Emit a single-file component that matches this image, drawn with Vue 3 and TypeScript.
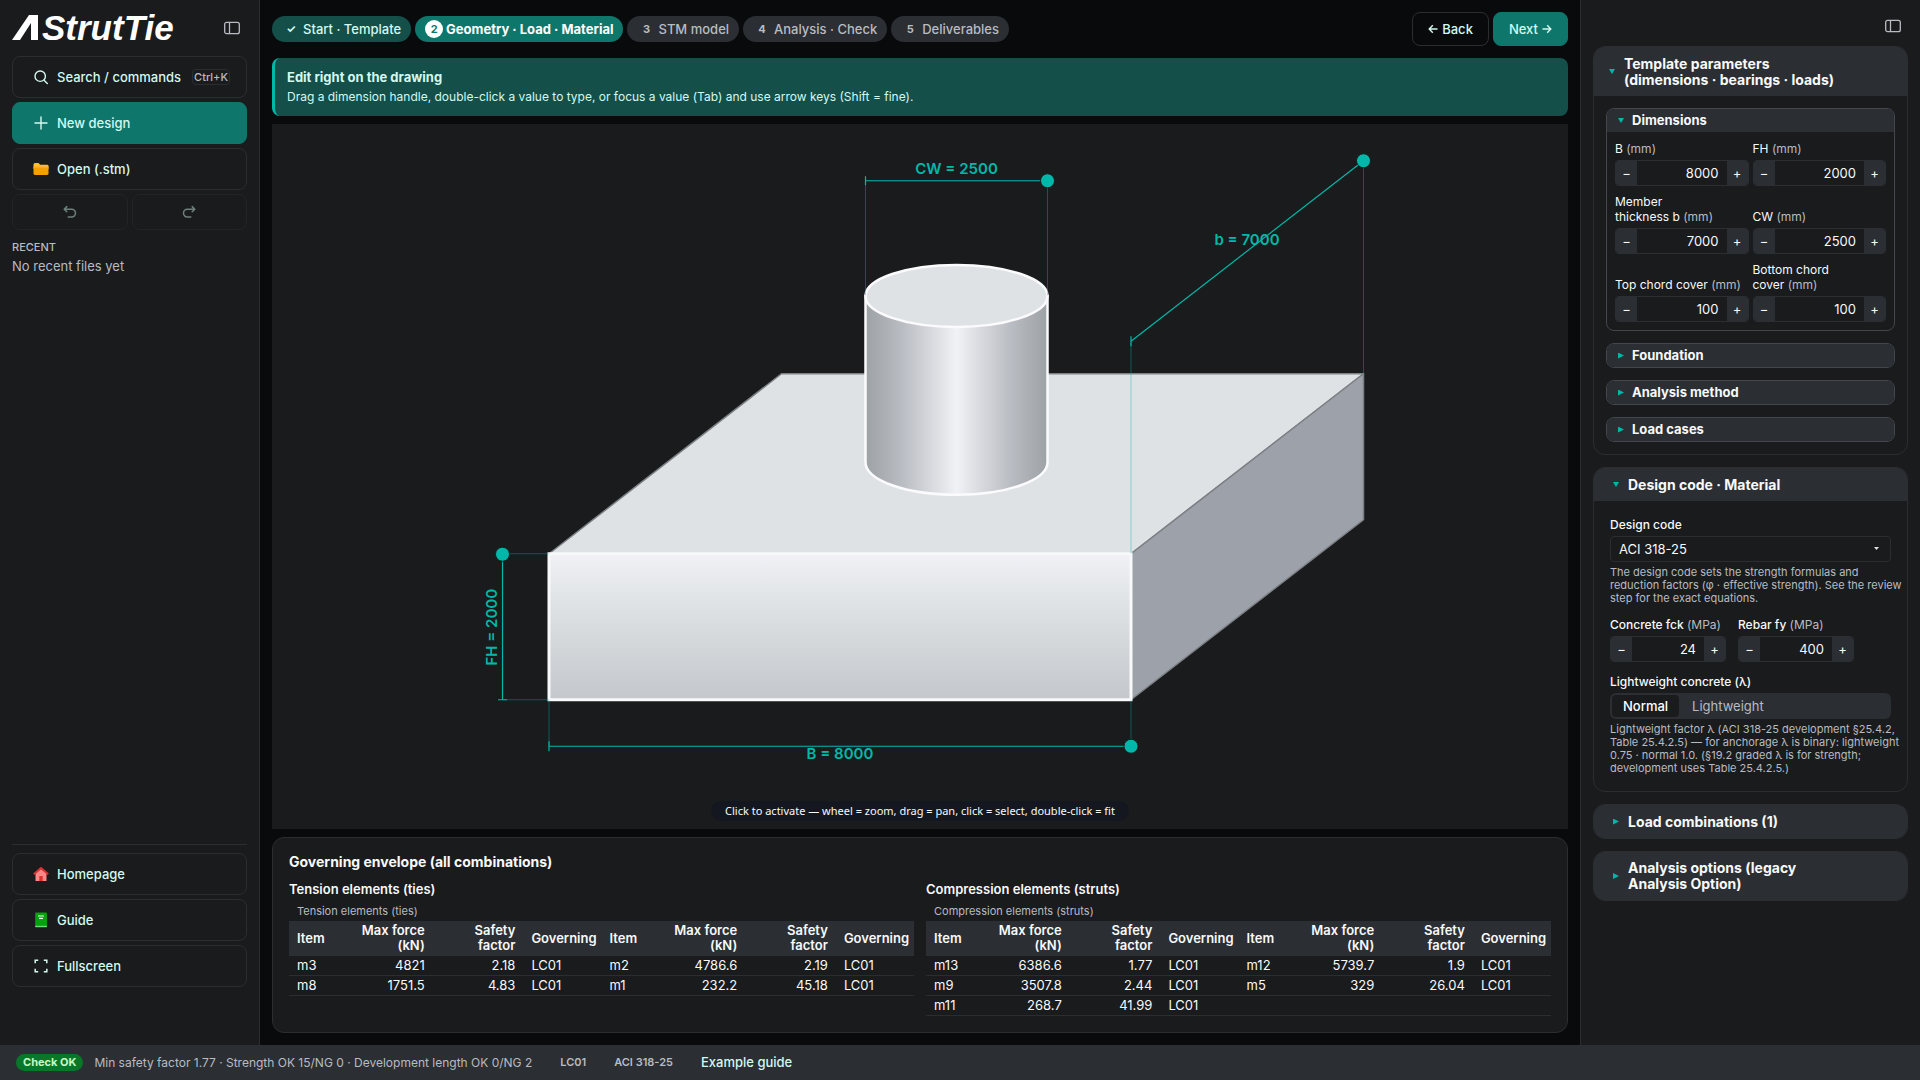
<script setup lang="ts">
import { reactive, ref } from 'vue'

interface Step {
  mark: string
  label: string
  state: 'done' | 'current' | 'todo'
}

interface Field {
  id: string
  label: string
  unit: string
  value: number
  step: number
}

type Cell = [item: string, force: string, safety: string, governing: string]

interface ResultTable {
  title: string
  rows: [Cell, Cell?][]
}

const steps: Step[] = [
  { mark: '✓', label: 'Start · Template', state: 'done' },
  { mark: '2', label: 'Geometry · Load · Material', state: 'current' },
  { mark: '3', label: 'STM model', state: 'todo' },
  { mark: '4', label: 'Analysis · Check', state: 'todo' },
  { mark: '5', label: 'Deliverables', state: 'todo' },
]

const dimensions = reactive<Field[]>([
  { id: 'dim-b', label: 'B', unit: '(mm)', value: 8000, step: 100 },
  { id: 'dim-fh', label: 'FH', unit: '(mm)', value: 2000, step: 100 },
  { id: 'dim-thk', label: 'Member\nthickness b', unit: '(mm)', value: 7000, step: 100 },
  { id: 'dim-cw', label: 'CW', unit: '(mm)', value: 2500, step: 100 },
  { id: 'dim-top', label: 'Top chord cover', unit: '(mm)', value: 100, step: 10 },
  { id: 'dim-bot', label: 'Bottom chord\ncover', unit: '(mm)', value: 100, step: 10 },
])

const materials = reactive<Field[]>([
  { id: 'mat-fck', label: 'Concrete fck', unit: '(MPa)', value: 24, step: 1 },
  { id: 'mat-fy', label: 'Rebar fy', unit: '(MPa)', value: 400, step: 10 },
])

const closedGroups = ['Foundation', 'Analysis method', 'Load cases']

const tables: ResultTable[] = [
  {
    title: 'Tension elements (ties)',
    rows: [
      [['m3', '4821', '2.18', 'LC01'], ['m2', '4786.6', '2.19', 'LC01']],
      [['m8', '1751.5', '4.83', 'LC01'], ['m1', '232.2', '45.18', 'LC01']],
    ],
  },
  {
    title: 'Compression elements (struts)',
    rows: [
      [['m13', '6386.6', '1.77', 'LC01'], ['m12', '5739.7', '1.9', 'LC01']],
      [['m9', '3507.8', '2.44', 'LC01'], ['m5', '329', '26.04', 'LC01']],
      [['m11', '268.7', '41.99', 'LC01'], undefined],
    ],
  },
]

const designCode = ref('ACI 318-25')
const weight = ref('Normal')

function nudge(field: Field, direction: number) {
  field.value += direction * field.step
}
</script>

<template>
  <div class="app">
    <aside class="sidebar">
      <div class="brand">
        <svg class="logo" viewBox="0 0 164 28" role="img" aria-label="AStrutTie">
          <path d="M0 26 L17 1 H26 V26 H19 V9 L8 26 Z" fill="#fff" />
          <text x="30" y="26" class="logo-text">StrutTie</text>
        </svg>
        <button class="icon-btn" type="button" aria-label="Toggle sidebar">
          <svg width="16" height="16" viewBox="0 0 16 16" fill="none" stroke="currentColor" stroke-width="1.3">
            <rect x="0.7" y="2.3" width="14.6" height="11.4" rx="2" />
            <path d="M5.5 2.3V13.7" />
          </svg>
        </button>
      </div>

      <button class="side-btn" type="button">
        <svg class="ico" viewBox="0 0 16 16" fill="none" stroke="currentColor" stroke-width="1.4" stroke-linecap="round">
          <circle cx="7.2" cy="7.2" r="5.2" />
          <path d="M11 11.2L14.3 14.5" />
        </svg>
        <span>Search / commands</span>
        <kbd>Ctrl+K</kbd>
      </button>
      <button class="side-btn primary" type="button">
        <svg class="ico" viewBox="0 0 16 16" fill="none" stroke="currentColor" stroke-width="1.4" stroke-linecap="round">
          <path d="M8 2V14M2 8H14" />
        </svg>
        <span>New design</span>
      </button>
      <button class="side-btn" type="button">
        <svg class="ico" viewBox="0 0 16 16">
          <path d="M0.5 3.5Q0.5 2 2 2H5.5L7.2 3.7H14Q15.5 3.7 15.5 5V8H0.5Z" fill="#fcc419" />
          <path d="M0.5 6.2H15.5V12.6Q15.5 14 14 14H2Q0.5 14 0.5 12.6Z" fill="#f59f00" />
          <path d="M0.5 5.4H15.5V6.6H0.5Z" fill="#ffa94d" />
        </svg>
        <span>Open (.stm)</span>
      </button>
      <div class="history">
        <button type="button" disabled aria-label="Undo">
          <svg width="16" height="16" viewBox="0 0 16 16" fill="none" stroke="currentColor" stroke-width="1.5" stroke-linecap="round" stroke-linejoin="round">
            <path d="M4.8 2.6L2.2 5.2L4.8 7.8M2.2 5.2H9.6A3.9 3.9 0 0 1 9.6 13H6.2" />
          </svg>
        </button>
        <button type="button" disabled aria-label="Redo">
          <svg width="16" height="16" viewBox="0 0 16 16" fill="none" stroke="currentColor" stroke-width="1.5" stroke-linecap="round" stroke-linejoin="round">
            <path d="M11.2 2.6L13.8 5.2L11.2 7.8M13.8 5.2H6.4A3.9 3.9 0 0 0 6.4 13H9.8" />
          </svg>
        </button>
      </div>
      <h2 class="recent">RECENT</h2>
      <p class="no-recent">No recent files yet</p>

      <nav class="side-links">
        <button class="side-btn" type="button">
          <svg class="ico" viewBox="0 0 16 16">
            <path d="M2.5 7.5L8 3L13.5 7.5V15H2.5Z" fill="#ff8787" />
            <path d="M6.3 10H9.7V15H6.3Z" fill="#e03131" />
            <path d="M0.8 8.2L8 2L15.2 8.2" fill="none" stroke="#e03131" stroke-width="2" stroke-linejoin="round" />
          </svg>
          <span>Homepage</span>
        </button>
        <button class="side-btn" type="button">
          <svg class="ico" viewBox="0 0 16 16">
            <rect x="2.2" y="0.5" width="11.8" height="15" rx="1" fill="#00a30b" />
            <path d="M2.2 13.8H14V15H2.2Z" fill="#69db7c" />
            <path d="M5 4H11M6 6.4H10" stroke="#ebfbee" stroke-width="1.2" />
          </svg>
          <span>Guide</span>
        </button>
        <button class="side-btn" type="button">
          <svg class="ico" viewBox="0 0 16 16" fill="none" stroke="currentColor" stroke-width="1.5">
            <path d="M2.2 5.2V2.2H5.2M10.8 2.2H13.8V5.2M13.8 10.8V13.8H10.8M5.2 13.8H2.2V10.8" />
          </svg>
          <span>Fullscreen</span>
        </button>
      </nav>
    </aside>

    <main class="main">
      <header class="topbar">
        <ol class="steps">
          <li v-for="step in steps" :key="step.label">
            <button class="step" :class="step.state" type="button">
              <span class="mark">{{ step.mark }}</span>
              <span>{{ step.label }}</span>
            </button>
          </li>
        </ol>
        <div class="pager">
          <button class="pager-btn" type="button">
            <svg width="10" height="10" viewBox="0 0 10 10" fill="none" stroke="currentColor" stroke-width="1.4"><path d="M9.5 5H1.2M4.8 1.3L1.2 5L4.8 8.7" /></svg>
            Back
          </button>
          <button class="pager-btn primary" type="button">
            Next
            <svg width="10" height="10" viewBox="0 0 10 10" fill="none" stroke="currentColor" stroke-width="1.4"><path d="M0.5 5H8.8M5.2 1.3L8.8 5L5.2 8.7" /></svg>
          </button>
        </div>
      </header>

      <section class="banner">
        <strong>Edit right on the drawing</strong>
        <p>Drag a dimension handle, double-click a value to type, or focus a value (Tab) and use arrow keys (Shift = fine).</p>
      </section>

      <section class="canvas">
        <svg class="drawing" viewBox="0 0 1296 704">
          <defs>
            <linearGradient id="front" x1="0" y1="0" x2="0" y2="1">
              <stop offset="0" stop-color="#f1f1f6" />
              <stop offset="0.35" stop-color="#dee2e4" />
              <stop offset="0.5" stop-color="#d8dcde" />
              <stop offset="1" stop-color="#c4c7cc" />
            </linearGradient>
            <linearGradient id="barrel" x1="0" y1="0" x2="1" y2="0">
              <stop offset="0" stop-color="#9da2a5" />
              <stop offset="0.2" stop-color="#b9bcc2" />
              <stop offset="0.5" stop-color="#f1f2f5" />
              <stop offset="0.8" stop-color="#b9bcc2" />
              <stop offset="1" stop-color="#9da2a5" />
            </linearGradient>
          </defs>

          <g stroke="#7d8186" stroke-width="1.5" stroke-linejoin="round">
            <path d="M277 429.500L509.500 249.500H1091.500L859 429.500Z" fill="#dee2e5" />
            <path d="M859 429.500L1091.500 249.500V395.500L859 575.500Z" fill="#9da1a9" />
          </g>
          <rect x="277" y="429.500" width="582" height="146" fill="url(#front)" stroke="#f8f9fa" stroke-width="3" />
          <path d="M593.500 171.700V338C593.500 356 634 370.500 684.500 370.500S775.500 356 775.500 338V171.700Z" fill="url(#barrel)" stroke="#fbfbfd" stroke-width="2.500" />
          <ellipse cx="684.500" cy="171.700" rx="91" ry="31" fill="#dee2e5" stroke="#fbfbfd" stroke-width="2.500" />

          <g class="ext">
            <path d="M593.500 56V171M775.500 56V171" />
            <path d="M859 217V429M1091.500 37V249" />
            <path d="M231 429.500H277M231 575.500H277" />
            <path d="M277 576V622M859 576V622" />
          </g>
          <g class="dim">
            <path d="M593.500 56.500H775.500M593.500 52V61" />
            <path d="M859 217L1091.500 36.500M859 212V222" />
            <path d="M230.500 429.500V575.500M226 575.500H235" />
            <path d="M277 622H859M277 617V627" />
          </g>
          <g class="handle">
            <circle cx="775.500" cy="56.500" r="7" />
            <circle cx="1091.500" cy="36.500" r="7" />
            <circle cx="230.500" cy="430" r="7" />
            <circle cx="859" cy="622" r="7" />
          </g>
          <g class="dim-label">
            <text x="684.500" y="50">CW = 2500</text>
            <text x="975" y="121">b = 7000</text>
            <text transform="translate(225 503) rotate(-90)">FH = 2000</text>
            <text x="568" y="635">B = 8000</text>
          </g>
        </svg>
        <p class="hint-pill">Click to activate — wheel = zoom, drag = pan, click = select, double-click = fit</p>
      </section>

      <section class="results">
        <h2>Governing envelope (all combinations)</h2>
        <div class="result-grid">
          <div v-for="table in tables" :key="table.title">
            <h3>{{ table.title }}</h3>
            <table>
              <caption>{{ table.title }}</caption>
              <colgroup>
                <template v-for="n in 2" :key="n">
                  <col class="c-item" /><col class="c-force" /><col class="c-safety" /><col class="c-gov" />
                </template>
              </colgroup>
              <thead>
                <tr>
                  <template v-for="n in 2" :key="n">
                    <th scope="col">Item</th>
                    <th scope="col" class="num">Max force (kN)</th>
                    <th scope="col" class="num">Safety factor</th>
                    <th scope="col" class="gov">Governing</th>
                  </template>
                </tr>
              </thead>
              <tbody>
                <tr v-for="(row, r) in table.rows" :key="r">
                  <template v-for="(cell, c) in row" :key="c">
                    <td>{{ cell?.[0] }}</td>
                    <td class="num">{{ cell?.[1] }}</td>
                    <td class="num">{{ cell?.[2] }}</td>
                    <td>{{ cell?.[3] }}</td>
                  </template>
                </tr>
              </tbody>
            </table>
          </div>
        </div>
      </section>
    </main>

    <aside class="panel">
      <div class="panel-top">
        <button class="icon-btn" type="button" aria-label="Toggle panel">
          <svg width="16" height="16" viewBox="0 0 16 16" fill="none" stroke="currentColor" stroke-width="1.3">
            <rect x="0.7" y="2.3" width="14.6" height="11.4" rx="2" />
            <path d="M5.5 2.3V13.7" />
          </svg>
        </button>
      </div>

      <section class="card">
        <button class="card-head lead" type="button" aria-expanded="true">
          <i class="tri down"></i><span>Template parameters<br />(dimensions · bearings · loads)</span>
        </button>
        <div class="groups">
          <div class="group">
            <button class="group-head" type="button" aria-expanded="true"><i class="tri down"></i>Dimensions</button>
            <div class="dim-grid">
              <div v-for="f in dimensions" :key="f.id" class="field">
                <label :for="f.id">{{ f.label }} <span class="unit">{{ f.unit }}</span></label>
                <div class="stepper">
                  <button type="button" :aria-label="`Decrease ${f.label}`" @click="nudge(f, -1)">−</button>
                  <input :id="f.id" v-model.number="f.value" inputmode="numeric" />
                  <button type="button" :aria-label="`Increase ${f.label}`" @click="nudge(f, 1)">+</button>
                </div>
              </div>
            </div>
          </div>
          <div v-for="g in closedGroups" :key="g" class="group">
            <button class="group-head" type="button" aria-expanded="false"><i class="tri right"></i>{{ g }}</button>
          </div>
        </div>
      </section>

      <section class="card">
        <button class="card-head" type="button" aria-expanded="true"><i class="tri down"></i><span>Design code · Material</span></button>
        <div class="form">
          <div class="field">
            <label for="code">Design code</label>
            <div class="select">
              <select id="code" v-model="designCode"><option>ACI 318-25</option></select>
              <i class="caret"></i>
            </div>
            <p class="note">The design code sets the strength formulas and reduction factors (φ · effective strength). See the review step for the exact equations.</p>
          </div>
          <div class="mat-row">
            <div v-for="f in materials" :key="f.id" class="field">
              <label :for="f.id">{{ f.label }} <span class="unit">{{ f.unit }}</span></label>
              <div class="stepper">
                <button type="button" :aria-label="`Decrease ${f.label}`" @click="nudge(f, -1)">−</button>
                <input :id="f.id" v-model.number="f.value" inputmode="numeric" />
                <button type="button" :aria-label="`Increase ${f.label}`" @click="nudge(f, 1)">+</button>
              </div>
            </div>
          </div>
          <div class="field">
            <span id="lw" class="label">Lightweight concrete (λ)</span>
            <div class="segmented" role="radiogroup" aria-labelledby="lw">
              <label v-for="w in ['Normal', 'Lightweight']" :key="w" :class="{ on: weight === w }">
                <input v-model="weight" type="radio" name="weight" :value="w" />{{ w }}
              </label>
            </div>
            <p class="note">Lightweight factor λ (ACI 318-25 development §25.4.2, Table 25.4.2.5) — for anchorage λ is binary: lightweight 0.75 · normal 1.0. (§19.2 graded λ is for strength; development uses Table 25.4.2.5.)</p>
          </div>
        </div>
      </section>

      <section class="card">
        <button class="card-head" type="button" aria-expanded="false"><i class="tri right"></i><span>Load combinations (1)</span></button>
      </section>
      <section class="card">
        <button class="card-head tall" type="button" aria-expanded="false"><i class="tri right"></i><span>Analysis options (legacy<br />Analysis Option)</span></button>
      </section>
    </aside>

    <footer class="status">
      <span class="badge">Check OK</span>
      <span class="summary">Min safety factor 1.77 · Strength OK 15/NG 0 · Development length OK 0/NG 2</span>
      <span class="tag">LC01</span>
      <span class="tag">ACI 318-25</span>
      <a href="#guide">Example guide</a>
    </footer>
  </div>
</template>

<style>
body {
  margin: 0;
  background: #090a0c;
}
</style>

<style scoped>
.app {
  --surface: #1a1b1d;
  --raised: #2b2e33;
  --line: #2b2d31;
  --teal: #0f766c;
  --accent: #00b8a9;
  --mint: #d3f9f0;
  --dim: #b8bcc2;
  display: grid;
  grid-template: 1fr auto / 260px minmax(0, 1fr) 340px;
  min-height: 100vh;
  font: 13px/15px Inter, 'Noto Sans', sans-serif;
  color: #f8f9fa;
  background: #090a0c;
}
.app *,
.app *::before {
  box-sizing: border-box;
}
button,
input,
select {
  font: inherit;
  color: inherit;
  margin: 0;
}
button {
  cursor: pointer;
}
h2,
h3,
p,
ol {
  margin: 0;
  padding: 0;
}

.sidebar {
  display: flex;
  flex-direction: column;
  gap: 4px;
  padding: 12px 12px 58px;
  background: var(--surface);
  border-right: 1px solid var(--line);
}
.brand {
  display: flex;
  align-items: center;
  justify-content: space-between;
  height: 32px;
  margin-bottom: 8px;
  padding-right: 7px;
}
.logo {
  width: 164px;
  height: 28px;
  overflow: visible;
}
.logo-text {
  font: italic 700 35px 'Liberation Sans', Arial, sans-serif;
  fill: #fff;
}
.icon-btn {
  display: flex;
  padding: 0;
  border: 0;
  background: none;
  color: var(--dim);
}
.side-btn {
  display: flex;
  align-items: center;
  gap: 8px;
  height: 42px;
  padding: 0 16px 0 20px;
  border: 1px solid var(--line);
  border-radius: 8px;
  background: transparent;
  color: var(--mint);
  font-weight: 500;
}
.side-btn.primary {
  background: var(--teal);
  border-color: var(--teal);
}
.ico {
  flex: none;
  width: 16px;
  height: 16px;
}
kbd {
  margin-left: auto;
  padding: 0 1px;
  border: 1px solid var(--line);
  border-radius: 4px;
  font: 500 11px/14px Inter, sans-serif;
  color: var(--dim);
}
.history {
  display: grid;
  grid-template-columns: 1fr 1fr;
  gap: 4px;
}
.history button {
  display: flex;
  align-items: center;
  justify-content: center;
  height: 36px;
  padding: 0;
  border: 1px solid #222427;
  border-radius: 8px;
  background: transparent;
  color: #6f7f7c;
}
.recent {
  margin-top: 6px;
  font: 500 11px/15px Inter, sans-serif;
  color: var(--dim);
}
.no-recent {
  color: var(--dim);
}
.side-links {
  display: flex;
  flex-direction: column;
  gap: 4px;
  margin-top: auto;
  padding-top: 8px;
  border-top: 1px solid var(--line);
}

.main {
  display: flex;
  flex-direction: column;
  gap: 8px;
  padding: 12px;
}
.topbar {
  display: flex;
  align-items: center;
  justify-content: space-between;
  margin-bottom: 4px;
}
.steps {
  display: flex;
  gap: 4px;
  list-style: none;
}
.step {
  display: flex;
  align-items: center;
  gap: 3px;
  height: 26px;
  padding: 0 10px;
  border: 0;
  border-radius: 13px;
  background: var(--raised);
  color: var(--dim);
  font-weight: 500;
  white-space: nowrap;
}
.step.done {
  background: #154f49;
  color: var(--mint);
}
.step.current {
  background: var(--teal);
  color: #fff;
  font-weight: 700;
}
.mark {
  width: 18px;
  border-radius: 9px;
  font: 700 11px/18px Inter, sans-serif;
  text-align: center;
}
.current .mark {
  background: #fff;
  color: var(--teal);
}
.pager {
  display: flex;
  gap: 4px;
}
.pager-btn {
  display: flex;
  align-items: center;
  gap: 4px;
  height: 34px;
  padding: 0 15px;
  border: 1px solid var(--line);
  border-radius: 8px;
  background: transparent;
  color: var(--mint);
  font-weight: 500;
}
.pager-btn.primary {
  background: var(--teal);
  border-color: var(--teal);
}
.banner {
  padding: 10px 12px;
  border-left: 3px solid var(--accent);
  border-radius: 8px;
  background: #154f49;
  color: var(--mint);
  line-height: 19px;
}
.banner strong {
  display: block;
}
.banner p {
  font-size: 12px;
}
.canvas {
  position: relative;
  display: flex;
  flex: 1;
  min-height: 400px;
  background: var(--surface);
}
.drawing {
  width: 100%;
  height: 100%;
}
.ext {
  fill: none;
  stroke: var(--accent);
  stroke-opacity: 0.4;
}
.dim {
  fill: none;
  stroke: var(--accent);
  stroke-width: 1.2;
}
.handle {
  fill: var(--accent);
  stroke: var(--surface);
}
.dim-label {
  font: 600 15px Inter, sans-serif;
  fill: var(--accent);
  text-anchor: middle;
}
.hint-pill {
  position: absolute;
  bottom: 8px;
  left: 50%;
  padding: 0 14px;
  border-radius: 10px;
  background: #14171f;
  font: 11px/20px 'Noto Sans', sans-serif;
  white-space: nowrap;
  transform: translateX(-50%);
}
.results {
  padding: 16px;
  border: 1px solid var(--line);
  border-radius: 12px;
  background: var(--surface);
}
.results h2 {
  margin-bottom: 10px;
  font: 700 14px/16px Inter, sans-serif;
}
.results h3 {
  margin-bottom: 4px;
  font: 600 13px/18px Inter, sans-serif;
}
.result-grid {
  display: grid;
  grid-template-columns: 1fr 1fr;
  gap: 12px;
}
table {
  width: 100%;
  table-layout: fixed;
  border-collapse: collapse;
}
caption {
  padding: 2px 8px;
  font-size: 11px;
  line-height: 15px;
  text-align: left;
  color: var(--dim);
}
.c-item {
  width: 9%;
}
.c-force {
  width: 14%;
}
.c-safety {
  width: 14.5%;
}
.c-gov {
  width: 12.5%;
}
th,
td {
  height: 20px;
  padding: 2px 8px;
  text-align: left;
}
th {
  height: 35px;
  background: var(--raised);
  font-weight: 600;
}
th.gov {
  padding-right: 0;
}
td {
  border-bottom: 1px solid var(--line);
}
th.num,
td.num {
  text-align: right;
}

.panel {
  display: flex;
  flex-direction: column;
  gap: 12px;
  padding: 18px 12px 12px;
  background: var(--surface);
  border-left: 1px solid var(--line);
}
.panel-top {
  display: flex;
  justify-content: flex-end;
  height: 16px;
  padding-right: 7px;
}
.card {
  overflow: hidden;
  border: 1px solid var(--line);
  border-radius: 12px;
}
.card-head {
  display: flex;
  align-items: center;
  gap: 9px;
  width: 100%;
  min-height: 33px;
  padding: 0 19px;
  border: 0;
  background: var(--raised);
  font-weight: 700;
  font-size: 14px;
  line-height: 16px;
  text-align: left;
}
.card-head.lead {
  min-height: 49px;
  padding: 0 15px;
}
.card-head.tall {
  min-height: 48px;
}
.tri {
  flex: none;
  width: 6px;
  height: 5px;
  background: var(--accent);
}
.tri.down {
  clip-path: polygon(0 0, 100% 0, 50% 100%);
}
.tri.right {
  height: 6px;
  clip-path: polygon(0 0, 100% 50%, 0 100%);
}
.groups {
  display: flex;
  flex-direction: column;
  gap: 12px;
  padding: 12px;
}
.group {
  overflow: hidden;
  border: 1px solid #43464c;
  border-radius: 8px;
}
.group-head {
  display: flex;
  align-items: center;
  gap: 8px;
  width: 100%;
  height: 23px;
  padding: 0 11px;
  border: 0;
  background: var(--raised);
  font-weight: 700;
}
.dim-grid {
  display: grid;
  grid-template-columns: repeat(2, minmax(0, 1fr));
  align-items: end;
  gap: 8px 4px;
  padding: 9px 8px 8px;
}
.field label,
.field .label {
  display: block;
  margin-bottom: 4px;
  font-size: 12px;
  white-space: pre;
}
.form .field label,
.form .field .label {
  font-weight: 500;
}
.field .unit,
.form .field .unit {
  font-weight: 400;
  color: var(--dim);
}
.stepper {
  display: flex;
  height: 26px;
  overflow: hidden;
  border: 1px solid var(--raised);
  border-radius: 4px;
}
.stepper button {
  flex: none;
  width: 21px;
  padding: 0;
  border: 0;
  background: var(--raised);
}
.stepper input {
  flex: 1;
  width: 0;
  padding: 0 8px;
  border: 0;
  background: var(--surface);
  text-align: right;
}
.form {
  display: flex;
  flex-direction: column;
  gap: 12px;
  padding: 16px;
}
.mat-row {
  display: flex;
  gap: 12px;
}
.mat-row .field {
  width: 116px;
}
.select {
  position: relative;
}
select {
  display: block;
  width: 100%;
  height: 26px;
  padding: 0 8px;
  border: 1px solid var(--line);
  border-radius: 4px;
  background: var(--surface);
  appearance: none;
}
.caret {
  position: absolute;
  top: 11px;
  right: 12px;
  width: 5px;
  height: 3px;
  background: #dee2e6;
  clip-path: polygon(0 0, 100% 0, 50% 100%);
}
.note {
  margin: 4px -12px 0 0;
  font-size: 11px;
  line-height: 13px;
  color: var(--dim);
}
.segmented {
  display: flex;
  gap: 2px;
  height: 26px;
  padding: 2px;
  border-radius: 6px;
  background: var(--raised);
}
.form .segmented label {
  margin: 0;
  padding: 0 11px;
  border-radius: 4px;
  font-size: 13px;
  line-height: 22px;
  font-weight: 400;
  color: var(--dim);
}
.form .segmented label.on {
  background: var(--surface);
  color: #fff;
  font-weight: 500;
}
.segmented input {
  position: absolute;
  opacity: 0;
  pointer-events: none;
}

.status {
  grid-column: 1 / -1;
  display: flex;
  align-items: center;
  height: 35px;
  padding: 0 16px;
  background: var(--raised);
  color: var(--dim);
}
.badge {
  margin-right: 11px;
  padding: 0 7px;
  border-radius: 9px;
  background: #08772a;
  color: #c9f7c4;
  font: 700 11px/17px Inter, sans-serif;
}
.summary {
  font-size: 12px;
}
.tag {
  margin-left: 28px;
  font-size: 11px;
  font-weight: 600;
}
.status a {
  margin-left: 28px;
  color: var(--mint);
  font-weight: 500;
  text-decoration: none;
}
</style>
